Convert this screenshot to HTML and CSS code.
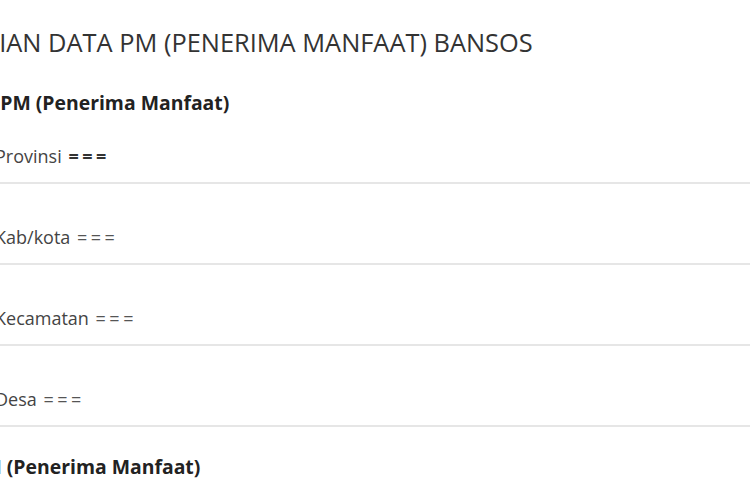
FILE: index.html
```html
<html>
<head>
<meta name="viewport" content="width=device-width, initial-scale=1.0" />
<link rel="stylesheet" href="styles.css">
</head>
<body>
<div class="page">
  <h1 class="title">PENCARIAN DATA PM (PENERIMA MANFAAT) BANSOS</h1>

  <div class="box">
    <h2 class="box_head first">Data PM (Penerima Manfaat)</h2>
    <ul class="list">
      <li class="item">Provinsi <b class="eq">===</b></li>
      <li class="item">Kab/kota <span class="eq2">===</span></li>
      <li class="item">Kecamatan <span class="eq2">===</span></li>
      <li class="item">Desa <span class="eq2">===</span></li>
    </ul>
    <h2 class="box_head second">Nama PM (Penerima Manfaat)</h2>
  </div>
</div>
</body>
</html>
```

FILE: styles.css
```css
body
{
	margin: 0;
	background: #fff;
	font-family: "Open Sans", "Noto Sans", sans-serif;
	overflow: hidden;
}
.page
{
	margin-left: -92px;
	padding-top: 24px;
}
.title
{
	font-size: 25.4px;
	font-weight: 400;
	color: #333;
	margin: 0 0 0 -5px;
	line-height: 36px;
	white-space: nowrap;
}
.box
{
	padding-left: 87px;
}
.box_head
{
	font-size: 19.4px;
	font-weight: 700;
	color: #222;
	margin: 0;
	line-height: 24px;
	white-space: nowrap;
}
.first
{
	margin: 31px 0 0 -46px;
}
.second
{
	margin: 28px 0 0 -87px;
}
.list
{
	list-style: none;
	margin: 0;
	padding: 0;
}
.item
{
	font-size: 18px;
	color: #444;
	padding: 40px 0 13px;
	border-bottom: 2px solid #e6e6e6;
	line-height: 26px;
	white-space: nowrap;
}
.item:first-child
{
	padding-top: 28px;
}
.eq
{
	font-weight: 700;
	color: #333;
	letter-spacing: 3.5px;
	margin-left: 2px;
}
.eq2
{
	color: #555;
	letter-spacing: 3.5px;
	margin-left: 2px;
}
```
